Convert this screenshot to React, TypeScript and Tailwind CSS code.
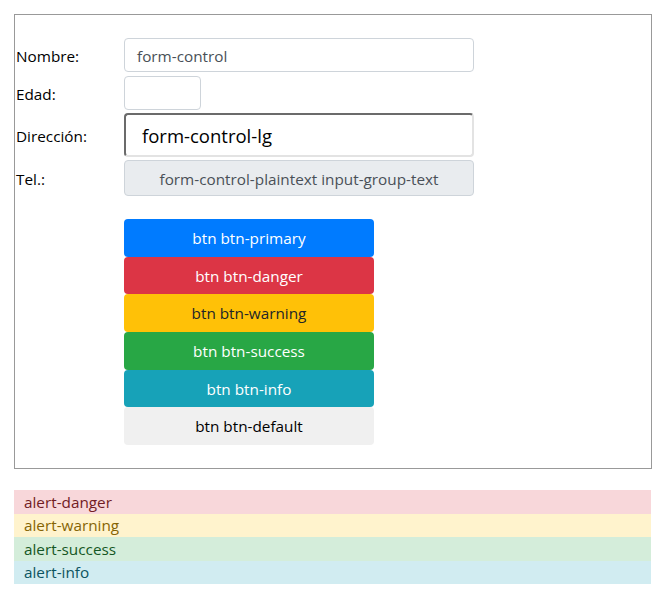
import React from "react";

const font = { fontFamily: '"Open Sans", "Noto Sans", sans-serif' };

export default function App() {
  const buttons = [
    { label: "btn btn-primary", cls: "bg-[#007bff] text-white h-[38px]" },
    { label: "btn btn-danger", cls: "bg-[#dc3545] text-white h-[37px]" },
    { label: "btn btn-warning", cls: "bg-[#ffc107] text-[#212529] h-[38px]" },
    { label: "btn btn-success", cls: "bg-[#28a745] text-white h-[38px]" },
    { label: "btn btn-info", cls: "bg-[#17a2b8] text-white h-[37px]" },
    { label: "btn btn-default", cls: "bg-[#f0f0f0] text-black h-[38px]" },
  ];
  return (
    <div className="bg-white min-h-[592px] pt-[14px] pl-[14px] pr-[18px] text-[15.3px] text-black font-['Open_Sans',sans-serif]" style={font}>
      <div className="border border-[#999999] pt-[23px] pb-[23px]">
        <div className="flex items-center h-[34px] mb-[4px]">
          <div className="w-[109px] pl-[1px] pt-[3px]">Nombre:</div>
          <div className="w-[350px] h-[34px] border border-[#ced4da] rounded-[4px] flex items-center pl-[12px] pt-[2px] text-[#495057]">
            form-control
          </div>
        </div>
        <div className="flex items-center h-[34px] mb-[3px]">
          <div className="w-[109px] pl-[1px] pt-[2px]">Edad:</div>
          <div className="w-[77px] h-[34px] border border-[#ced4da] rounded-[4px]" />
        </div>
        <div className="flex items-center h-[44px] mb-[3px]">
          <div className="w-[109px] pl-[1px] pt-[2px]">Dirección:</div>
          <div className="w-[350px] h-[44px] border-2 border-t-[#6b6b6b] border-l-[#6b6b6b] border-r-[#e3e3e3] border-b-[#e3e3e3] rounded-[4px] flex items-center pl-[16px] pt-[2px] text-[18.5px] text-black">
            form-control-lg
          </div>
        </div>
        <div className="flex items-center h-[36px]">
          <div className="w-[109px] pl-[1px] pt-[2px]">Tel.:</div>
          <div className="w-[350px] h-[36px] border border-[#ced4da] bg-[#e9ecef] rounded-[4px] flex items-center justify-center pt-[2px] text-[#495057]">
            form-control-plaintext input-group-text
          </div>
        </div>
        <div className="mt-[23px] ml-[109px] w-[250px] flex flex-col">
          {buttons.map((b) => (
            <div key={b.label} className={`${b.cls} rounded-[4px] flex items-center justify-center pt-[1px]`}>
              {b.label}
            </div>
          ))}
        </div>
      </div>
      <div className="mt-[21px] w-[637px]">
        <div className="h-[23.5px] bg-[#f8d7da] text-[#721c24] pl-[10px] pt-[1px] flex items-center">alert-danger</div>
        <div className="h-[23.5px] bg-[#fff3cd] text-[#856404] pl-[10px] pt-[1px] flex items-center">alert-warning</div>
        <div className="h-[23.5px] bg-[#d4edda] text-[#155724] pl-[10px] pt-[1px] flex items-center">alert-success</div>
        <div className="h-[23.5px] bg-[#d1ecf1] text-[#0c5460] pl-[10px] pt-[1px] flex items-center">alert-info</div>
      </div>
    </div>
  );
}
